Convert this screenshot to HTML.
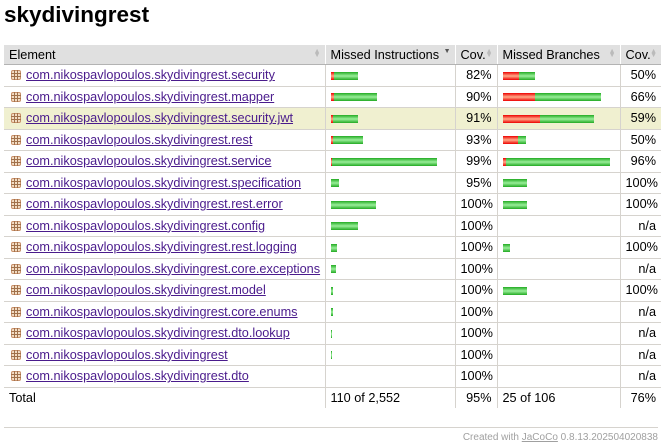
<!DOCTYPE html>
<html><head><meta charset="utf-8"><style>
body{margin:0;font-family:"Liberation Sans",sans-serif;font-size:12.7px;color:#000;background:#fff;width:662px;height:447px;overflow:hidden;position:relative}
h1{position:absolute;left:4px;top:2px;margin:0;font-size:22.5px;font-weight:bold}
table{position:absolute;left:4px;top:45px;border-collapse:collapse;width:657px;table-layout:fixed}
th{background:#e0e0e0;font-weight:normal;text-align:left;height:19px;padding:0 5px;border-bottom:1px solid #b3b3b3;border-right:1px solid #fff;position:relative}
th .s{position:absolute;right:4px;top:5px;font-size:7px;color:#bbb;line-height:4px}
td{height:20.5px;padding:0 5px;border-bottom:1px solid #d6d3ce;border-right:1px solid #d6d3ce;white-space:nowrap}
tbody td:first-child{padding-left:7px}
td:last-child,th:last-child{border-right:none}
tr.h td{background:#f0f0d0}
.r{text-align:right}
a{color:#4a1b8c;text-decoration:underline}
.ic{display:inline-block;width:10px;height:10px;vertical-align:-1px;margin-right:5px;position:relative}
.ic:before{content:"";position:absolute;left:0;top:0;width:8px;height:8px;border:1px solid #c8906a;background:#f2dcc4;border-radius:2px}
.ic:after{content:"";position:absolute;left:0;top:0;width:10px;height:10px;background:linear-gradient(#a0704a,#a0704a) 3px 0/1px 10px no-repeat,linear-gradient(#a0704a,#a0704a) 6px 0/1px 10px no-repeat,linear-gradient(#a0704a,#a0704a) 0 3px/10px 1px no-repeat,linear-gradient(#a0704a,#a0704a) 0 6px/10px 1px no-repeat}
.b{display:inline-block;height:8px;vertical-align:middle}
.rd{background:linear-gradient(#e00,#fa8 50%,#e00)}
.gr{background:linear-gradient(#2a2,#9e9 50%,#2a2);margin-right:8px}
tfoot td{border-bottom:none}
.ft{position:absolute;left:4px;right:4px;top:427px;border-top:1px solid #d6d3ce;text-align:right;font-size:10px;color:#a0a0a0;padding-top:4px}
.ft a{color:#a0a0a0}
</style></head><body>
<h1>skydivingrest</h1>
<table>
<colgroup><col style="width:321px"><col style="width:130px"><col style="width:42px"><col style="width:123px"><col style="width:41px"></colgroup>
<thead><tr><th>Element<span class="s">▲<br>▼</span></th><th>Missed Instructions<span class="s" style="color:#555">▼</span></th><th class="r" style="padding-right:14px">Cov.<span class="s">▲<br>▼</span></th><th>Missed Branches<span class="s">▲<br>▼</span></th><th class="r" style="padding-right:14px">Cov.<span class="s">▲<br>▼</span></th></tr></thead>
<tbody>
<tr><td><span class="ic"></span><a>com.nikospavlopoulos.skydivingrest.security</a></td><td><span class="b rd" style="width:3px"></span><span class="b gr" style="width:24px"></span></td><td class="r">82%</td><td><span class="b rd" style="width:16px"></span><span class="b gr" style="width:16px"></span></td><td class="r">50%</td></tr>
<tr><td><span class="ic"></span><a>com.nikospavlopoulos.skydivingrest.mapper</a></td><td><span class="b rd" style="width:3px"></span><span class="b gr" style="width:43px"></span></td><td class="r">90%</td><td><span class="b rd" style="width:32px"></span><span class="b gr" style="width:66px"></span></td><td class="r">66%</td></tr>
<tr class="h"><td><span class="ic"></span><a>com.nikospavlopoulos.skydivingrest.security.jwt</a></td><td><span class="b rd" style="width:2px"></span><span class="b gr" style="width:25px"></span></td><td class="r">91%</td><td><span class="b rd" style="width:37px"></span><span class="b gr" style="width:54px"></span></td><td class="r">59%</td></tr>
<tr><td><span class="ic"></span><a>com.nikospavlopoulos.skydivingrest.rest</a></td><td><span class="b rd" style="width:2px"></span><span class="b gr" style="width:30px"></span></td><td class="r">93%</td><td><span class="b rd" style="width:15px"></span><span class="b gr" style="width:8px"></span></td><td class="r">50%</td></tr>
<tr><td><span class="ic"></span><a>com.nikospavlopoulos.skydivingrest.service</a></td><td><span class="b rd" style="width:1px"></span><span class="b gr" style="width:105px"></span></td><td class="r">99%</td><td><span class="b rd" style="width:3px"></span><span class="b gr" style="width:104px"></span></td><td class="r">96%</td></tr>
<tr><td><span class="ic"></span><a>com.nikospavlopoulos.skydivingrest.specification</a></td><td><span class="b gr" style="width:8px"></span></td><td class="r">95%</td><td><span class="b gr" style="width:24px"></span></td><td class="r">100%</td></tr>
<tr><td><span class="ic"></span><a>com.nikospavlopoulos.skydivingrest.rest.error</a></td><td><span class="b gr" style="width:45px"></span></td><td class="r">100%</td><td><span class="b gr" style="width:24px"></span></td><td class="r">100%</td></tr>
<tr><td><span class="ic"></span><a>com.nikospavlopoulos.skydivingrest.config</a></td><td><span class="b gr" style="width:27px"></span></td><td class="r">100%</td><td></td><td class="r">n/a</td></tr>
<tr><td><span class="ic"></span><a>com.nikospavlopoulos.skydivingrest.rest.logging</a></td><td><span class="b gr" style="width:6px"></span></td><td class="r">100%</td><td><span class="b gr" style="width:7px"></span></td><td class="r">100%</td></tr>
<tr><td><span class="ic"></span><a>com.nikospavlopoulos.skydivingrest.core.exceptions</a></td><td><span class="b gr" style="width:5px"></span></td><td class="r">100%</td><td></td><td class="r">n/a</td></tr>
<tr><td><span class="ic"></span><a>com.nikospavlopoulos.skydivingrest.model</a></td><td><span class="b gr" style="width:2px"></span></td><td class="r">100%</td><td><span class="b gr" style="width:24px"></span></td><td class="r">100%</td></tr>
<tr><td><span class="ic"></span><a>com.nikospavlopoulos.skydivingrest.core.enums</a></td><td><span class="b gr" style="width:2px"></span></td><td class="r">100%</td><td></td><td class="r">n/a</td></tr>
<tr><td><span class="ic"></span><a>com.nikospavlopoulos.skydivingrest.dto.lookup</a></td><td><span class="b gr" style="width:1px"></span></td><td class="r">100%</td><td></td><td class="r">n/a</td></tr>
<tr><td><span class="ic"></span><a>com.nikospavlopoulos.skydivingrest</a></td><td><span class="b gr" style="width:1px"></span></td><td class="r">100%</td><td></td><td class="r">n/a</td></tr>
<tr><td><span class="ic"></span><a>com.nikospavlopoulos.skydivingrest.dto</a></td><td></td><td class="r">100%</td><td></td><td class="r">n/a</td></tr>
</tbody>
<tfoot><tr><td>Total</td><td>110 of 2,552</td><td class="r">95%</td><td>25 of 106</td><td class="r">76%</td></tr></tfoot>
</table>
<div class="ft">Created with <a>JaCoCo</a> 0.8.13.202504020838</div>
</body></html>
